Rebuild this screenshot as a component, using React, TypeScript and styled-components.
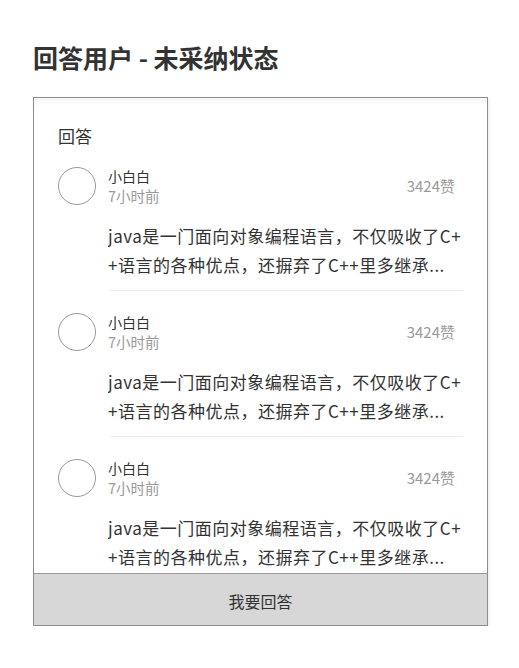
import React from "react";
import styled, { createGlobalStyle } from "styled-components";

const GlobalStyle = createGlobalStyle`
  html, body {
    margin: 0;
    padding: 0;
    background: #ffffff;
    font-family: "Noto Sans CJK SC", "Noto Sans", sans-serif;
    color: #333333;
  }
`;

const Page = styled.div`
  padding: 40px 31px 0 33px;
  width: 519px;
  box-sizing: border-box;
`;

const Title = styled.h1`
  margin: 0 0 23px 0;
  font-size: 25px;
  line-height: 34px;
  font-weight: 700;
  color: #333333;
`;

const Card = styled.div`
  width: 455px;
  height: 529px;
  box-sizing: border-box;
  border: 1px solid #8e8e8e;
  background: #ffffff;
  display: flex;
  flex-direction: column;
  box-shadow: 1px 1px 3px rgba(0, 0, 0, 0.08);
`;

const ListArea = styled.div`
  flex: 1;
  overflow: hidden;
  padding: 26px 24px 0 24px;
  box-shadow: inset 0 8px 8px -6px rgba(0, 0, 0, 0.06);
`;

const Label = styled.div`
  font-size: 17px;
  line-height: 24px;
  color: #333333;
  margin-bottom: 18px;
`;

const Item = styled.div<{ $first?: boolean }>`
  padding-top: ${(p) => (p.$first ? "0" : "21px")};
`;

const Header = styled.div`
  display: flex;
  align-items: center;
`;

const Avatar = styled.div`
  width: 38px;
  height: 38px;
  box-sizing: border-box;
  border: 1.5px solid #9a9a9a;
  border-radius: 50%;
  flex: none;
`;

const Meta = styled.div`
  margin-left: 12px;
  flex: 1;
  display: flex;
  flex-direction: column;
`;

const Name = styled.div`
  font-size: 14px;
  line-height: 20px;
  color: #333333;
`;

const Time = styled.div`
  font-size: 14.5px;
  line-height: 20px;
  color: #9a9a9a;
`;

const Likes = styled.div`
  font-size: 15px;
  line-height: 20px;
  color: #9a9a9a;
  margin-right: 8px;
`;

const Content = styled.div`
  margin: 15px 0 0 50px;
  font-size: 17px;
  line-height: 29px;
  letter-spacing: 0.5px;
  color: #333333;
  word-break: break-all;
  display: -webkit-box;
  -webkit-line-clamp: 2;
  -webkit-box-orient: vertical;
  overflow: hidden;
`;

const Divider = styled.div`
  margin: 11px 0 0 52px;
  border-top: 1px solid #ececec;
`;

const Footer = styled.button`
  flex: none;
  height: 52px;
  border: none;
  border-top: 1px solid #9a9a9a;
  background: #d7d7d7;
  font-family: "Noto Sans CJK SC", sans-serif;
  font-size: 16px;
  line-height: 20px;
  color: #333333;
  padding: 2px 0 0 0;
  cursor: pointer;
`;

const answers = [1, 2, 3].map((id) => ({
  id,
  name: "小白白",
  time: "7小时前",
  likes: "3424赞",
  text: "java是一门面向对象编程语言，不仅吸收了C++语言的各种优点，还摒弃了C++里多继承...",
}));

export default function App() {
  return (
    <>
      <GlobalStyle />
      <Page>
        <Title>回答用户 - 未采纳状态</Title>
        <Card>
          <ListArea>
            <Label>回答</Label>
            {answers.map((a, i) => (
              <Item key={a.id} $first={i === 0}>
                <Header>
                  <Avatar />
                  <Meta>
                    <Name>{a.name}</Name>
                    <Time>{a.time}</Time>
                  </Meta>
                  <Likes>{a.likes}</Likes>
                </Header>
                <Content>{a.text}</Content>
                {i < answers.length - 1 && <Divider />}
              </Item>
            ))}
          </ListArea>
          <Footer>我要回答</Footer>
        </Card>
      </Page>
    </>
  );
}
